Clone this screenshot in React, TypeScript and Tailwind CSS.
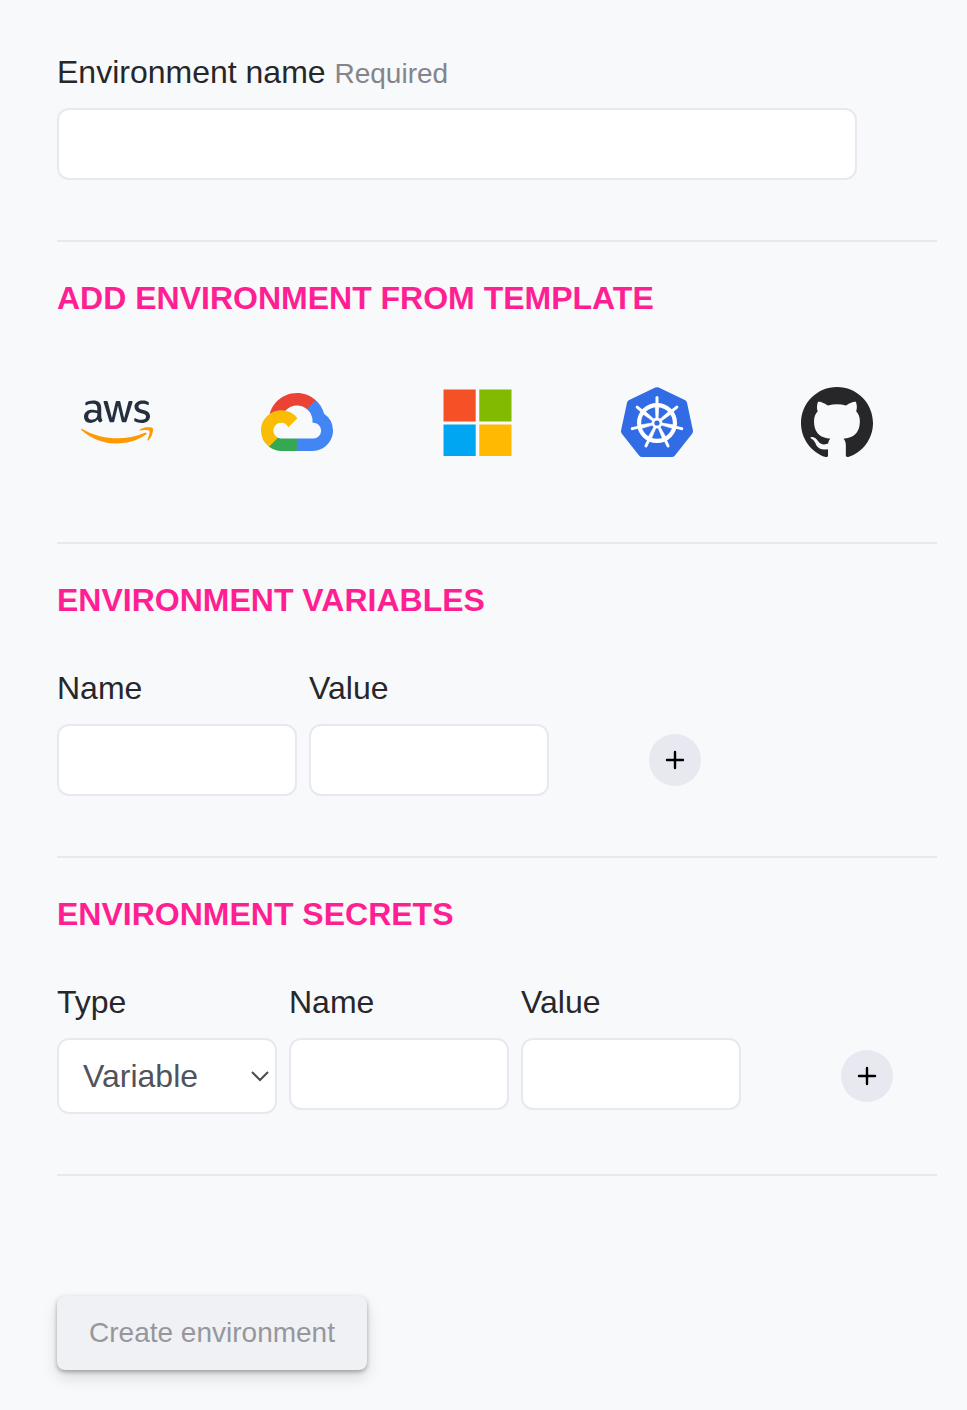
import type { ReactNode } from "react";
import { SiAmazonwebservices, SiGithub } from "react-icons/si";

function AwsLogo() {
  return (
    <>
      <svg className="absolute h-0 w-0" aria-hidden="true">
        <defs>
          <linearGradient id="aws-fill" gradientUnits="userSpaceOnUse" x1="0" y1="0" x2="0" y2="24">
            <stop offset="0.562" stopColor="#252f3e" />
            <stop offset="0.562" stopColor="#ff9900" />
          </linearGradient>
        </defs>
      </svg>
      <SiAmazonwebservices className="size-[72px]" fill="url(#aws-fill)" />
    </>
  );
}

function GoogleCloudLogo() {
  return (
    <svg className="h-[58px] w-[72px]" viewBox="0 0 256 206">
      <path fill="#ea4335" d="M170.25 56.82l22.25-22.25 1.49-9.37C153.44-11.68 88.98-7.5 52.42 33.92c-10.15 11.5-17.69 25.84-21.7 40.65l7.97-1.12 44.5-7.34 3.44-3.51c19.8-21.75 53.27-24.67 76.13-6.17z" />
      <path fill="#4285f4" d="M224.2 73.92a100.25 100.25 0 0 0-30.21-48.72l-31.23 31.23a55.52 55.52 0 0 1 20.37 44.04v5.54a27.8 27.8 0 1 1 0 55.28h-55.67L122 167.22v33.34l5.46 5.23h55.67c39.93.31 72.56-31.49 72.87-71.42a72.3 72.3 0 0 0-31.8-60.45" />
      <path fill="#34a853" d="M71.87 205.8h55.59v-44.51H71.87c-3.96 0-7.8-.85-11.4-2.5l-7.97 2.42-22.31 22.25-1.93 7.54a71.9 71.9 0 0 0 43.61 14.8" />
      <path fill="#fbbc05" d="M71.87 61.43C31.94 61.66-.24 94.23 0 134.16a72.3 72.3 0 0 0 28.26 56.83l32.21-32.2a27.8 27.8 0 1 1 36.78-36.77l32.2-32.21a72.2 72.2 0 0 0-57.58-28.38" />
    </svg>
  );
}

function MicrosoftLogo() {
  return (
    <svg className="size-[72px]" viewBox="0 0 72 72">
      <path fill="#f65126" d="M2.5 3.5h32.2v32H2.5z" />
      <path fill="#81ba00" d="M38.3 3.5h32.2v32H38.3z" />
      <path fill="#00a6f2" d="M2.5 38.5h32.2V70H2.5z" />
      <path fill="#ffb901" d="M38.3 38.5h32.2V70H38.3z" />
    </svg>
  );
}

const spokes = [0, 1, 2, 3, 4, 5, 6].map((i) => (i * 360) / 7);

function KubernetesLogo() {
  return (
    <svg className="size-[72px]" viewBox="0 0 72 72">
      <path
        fill="#326ce5"
        stroke="#326ce5"
        strokeWidth="8"
        strokeLinejoin="round"
        d="M36 5.2 62.1 17.7 68 45.2 50.8 67H21.2L4 45.2 9.9 17.7z"
      />
      <circle cx="36" cy="37" r="17.9" fill="none" stroke="#fff" strokeWidth="4.2" />
      {spokes.map((angle) => (
        <g key={angle} transform={`rotate(${angle} 36 37)`} stroke="#fff">
          <path d="M36 18.5v-6.9" strokeWidth="3" strokeLinecap="round" />
          <path d="M34.2 20h3.6l-.9 15h-1.8z" fill="#fff" strokeWidth="0.6" />
        </g>
      ))}
      <circle cx="36" cy="37" r="5.4" fill="#fff" />
      <circle cx="36" cy="37" r="2.6" fill="#326ce5" />
    </svg>
  );
}

function Heading({ children }: { children: ReactNode }) {
  return <h2 className="text-[32px] leading-[48px] font-bold text-[#ff1f93] uppercase">{children}</h2>;
}

function Divider() {
  return <hr className="mt-[60px] mb-8 border-t-2 border-[#e8e9ef]" />;
}

function Field({ label, width }: { label: string; width: string }) {
  return (
    <label className={`flex flex-col gap-3 ${width}`}>
      <span>{label}</span>
      <input className="h-[72px] w-full rounded-xl border-2 border-[#e8e8f0] bg-white px-6 outline-none" />
    </label>
  );
}

function AddButton() {
  return (
    <button type="button" aria-label="Add" className="flex size-[52px] items-center justify-center rounded-full bg-[#e8e8f0]">
      <svg className="size-6" viewBox="0 0 24 24" fill="none" stroke="#000" strokeWidth="2.4" strokeLinecap="round">
        <path d="M12 4v16M4 12h16" />
      </svg>
    </button>
  );
}

function Template({ children }: { children: ReactNode }) {
  return (
    <button type="button" className="flex h-[72px] w-[120px] items-center justify-center">
      {children}
    </button>
  );
}

export default function App() {
  return (
    <form className="min-h-[1410px] bg-[#f8f9fb] pt-12 pr-[30px] pl-[57px] font-['Liberation_Sans',Arial,sans-serif] text-[32px] leading-[48px] text-[#27272a]">
      <label className="flex flex-col gap-3">
        <span>
          Environment name <span className="text-[28px] leading-none text-[#84848c]">Required</span>
        </span>
        <input className="h-[72px] w-[800px] rounded-xl border-2 border-[#e8e8f0] bg-white px-6 outline-none" />
      </label>
      <Divider />

      <Heading>Add environment from template</Heading>
      <div className="mt-16 mb-[84px] flex gap-[60px]">
        <Template><AwsLogo /></Template>
        <Template><GoogleCloudLogo /></Template>
        <Template><MicrosoftLogo /></Template>
        <Template><KubernetesLogo /></Template>
        <Template>
          <SiGithub className="size-[72px] text-[#27272a]" />
        </Template>
      </div>
      <hr className="mb-8 border-t-2 border-[#e8e9ef]" />

      <Heading>Environment variables</Heading>
      <div className="mt-10 flex items-end">
        <div className="flex gap-3">
          <Field label="Name" width="w-[240px]" />
          <Field label="Value" width="w-[240px]" />
        </div>
        <div className="ml-[100px] flex h-[72px] items-center">
          <AddButton />
        </div>
      </div>
      <Divider />

      <Heading>Environment secrets</Heading>
      <div className="mt-10 flex items-end">
        <div className="flex items-start gap-3">
          <div className="flex w-[220px] flex-col gap-3">
            <span>Type</span>
            <button
              type="button"
              className="flex h-[76px] items-center justify-between rounded-xl border-2 border-[#e8e8f0] bg-white pr-[5px] pl-6 text-[#52525b]"
            >
              Variable
              <svg className="h-5 w-5" viewBox="0 0 20 20" fill="none" stroke="#4b4b50" strokeWidth="2">
                <path d="M2 6l8 8 8-8" />
              </svg>
            </button>
          </div>
          <Field label="Name" width="w-[220px]" />
          <Field label="Value" width="w-[220px]" />
        </div>
        <div className="ml-[100px] flex h-[76px] items-center">
          <AddButton />
        </div>
      </div>
      <Divider />

      <button
        type="button"
        className="mt-[120px] flex h-[74px] w-[310px] items-center justify-center rounded-lg bg-[#f0f1f5] text-[28px] text-[#96979c] shadow-[0_2px_4px_rgba(0,0,0,0.3),0_8px_16px_rgba(0,0,0,0.12)]"
      >
        Create environment
      </button>
    </form>
  );
}
